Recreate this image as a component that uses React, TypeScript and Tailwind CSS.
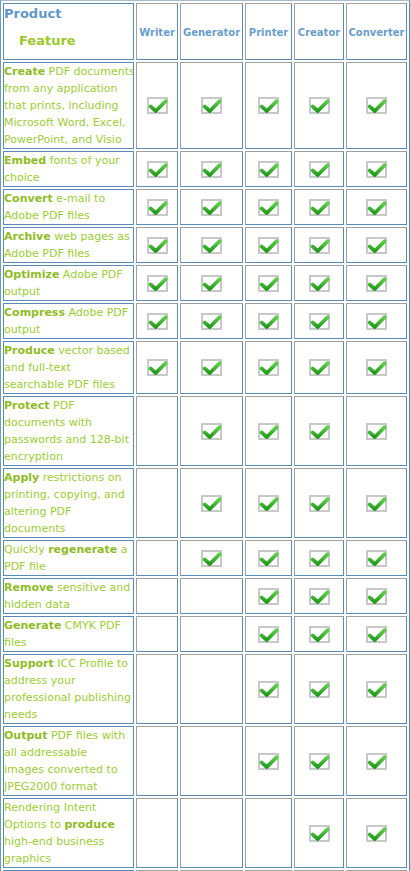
import React from "react";

type Row = { lines: React.ReactNode[]; checks: boolean[] };

const B = ({ children }: { children: React.ReactNode }) => (
  <b className="font-bold text-[#8fbc26]">{children}</b>
);

const all = [true, true, true, true, true];
const noW = [false, true, true, true, true];
const noWG = [false, false, true, true, true];
const onlyCC = [false, false, false, true, true];

const rows: Row[] = [
  {
    lines: [
      <><B>Create</B> PDF documents</>,
      "from any application",
      "that prints, including",
      "Microsoft Word, Excel,",
      "PowerPoint, and Visio",
    ],
    checks: all,
  },
  { lines: [<><B>Embed</B> fonts of your</>, "choice"], checks: all },
  { lines: [<><B>Convert</B> e-mail to</>, "Adobe PDF files"], checks: all },
  { lines: [<><B>Archive</B> web pages as</>, "Adobe PDF files"], checks: all },
  { lines: [<><B>Optimize</B> Adobe PDF</>, "output"], checks: all },
  { lines: [<><B>Compress</B> Adobe PDF</>, "output"], checks: all },
  {
    lines: [<><B>Produce</B> vector based</>, "and full-text", "searchable PDF files"],
    checks: all,
  },
  {
    lines: [<><B>Protect</B> PDF</>, "documents with", "passwords and 128-bit", "encryption"],
    checks: noW,
  },
  {
    lines: [<><B>Apply</B> restrictions on</>, "printing, copying, and", "altering PDF", "documents"],
    checks: noW,
  },
  { lines: [<>Quickly <B>regenerate</B> a</>, "PDF file"], checks: noW },
  { lines: [<><B>Remove</B> sensitive and</>, "hidden data"], checks: noWG },
  { lines: [<><B>Generate</B> CMYK PDF</>, "files"], checks: noWG },
  {
    lines: [<><B>Support</B> ICC Profile to</>, "address your", "professional publishing", "needs"],
    checks: noWG,
  },
  {
    lines: [<><B>Output</B> PDF files with</>, "all addressable", "images converted to", "JPEG2000 format"],
    checks: noWG,
  },
  {
    lines: ["Rendering Intent", <>Options to <B>produce</B></>, "high-end business", "graphics"],
    checks: onlyCC,
  },
];

const products = ["Writer", "Generator", "Printer", "Creator", "Converter"];

function Check() {
  return (
    <svg width="21" height="17" viewBox="0 0 21 17" className="block">
      <defs>
        <linearGradient id="chk" x1="0" y1="0" x2="0" y2="1">
          <stop offset="0" stopColor="#5fcf4a" />
          <stop offset="1" stopColor="#229a1c" />
        </linearGradient>
      </defs>
      <rect x="1" y="1" width="19" height="15" fill="#ffffff" stroke="#c8c8c8" strokeWidth="2" />
      <polyline
        points="3.6,9.4 8.8,14 18.6,4.2"
        fill="none"
        stroke="url(#chk)"
        strokeWidth="3.8"
        strokeLinecap="round"
        strokeLinejoin="round"
      />
    </svg>
  );
}

const featureCell =
  "border border-[#5a8bb4] bg-white text-[11px] leading-[17px] text-[#9dcc35] whitespace-nowrap overflow-hidden";
const valueCell =
  "border border-t-[#a0a0a0] border-l-[#a0a0a0] border-r-[#5a8bb4] border-b-[#5a8bb4] bg-white flex items-center justify-center";

export default function App() {
  return (
    <div
      className="w-[410px] bg-white"
      style={{ fontFamily: '"DejaVu Sans", Verdana, sans-serif' }}
    >
      <div className="grid grid-cols-[131px_42px_63px_47px_50px_61px] gap-[2px] p-[2px] border border-t-[#a9bccb] border-l-[#6f9bbf] border-r-[#5a8bb4] border-b-[#5a8bb4]">
        <div className="border border-[#5a8bb4] h-[57px] bg-white">
          <div className="pt-[2px] text-[13px] leading-[16px] font-bold text-[#5f97c9]">Product</div>
          <div className="mt-[11px] pl-[15px] text-[13px] leading-[16px] font-bold text-[#9dc72c]">Feature</div>
        </div>
        {products.map((p) => (
          <div
            key={p}
            className={valueCell + " text-[10px] font-bold text-[#6a9dcb] leading-[14px] pt-[2px]"}
          >
            {p}
          </div>
        ))}
        {rows.map((r, i) => (
          <React.Fragment key={i}>
            <div className={featureCell}>
              {r.lines.map((l, j) => (
                <div key={j}>{l}</div>
              ))}
            </div>
            {r.checks.map((c, j) => (
              <div key={j} className={valueCell}>
                {c ? <Check /> : null}
              </div>
            ))}
          </React.Fragment>
        ))}
        <div className="border border-[#5a8bb4] bg-white h-[36px]" />
        {products.map((p) => (
          <div key={p} className={valueCell + " h-[36px]"} />
        ))}
      </div>
    </div>
  );
}
